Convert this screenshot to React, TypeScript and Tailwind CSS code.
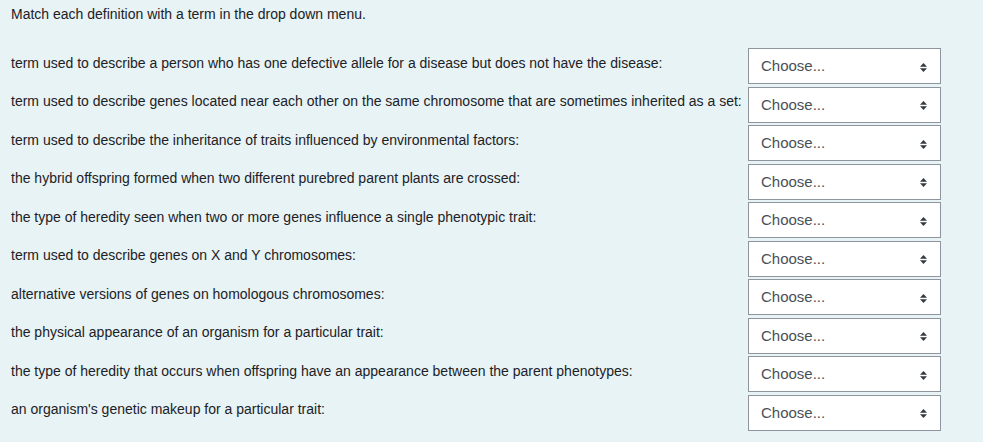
import React from "react";

const defs = [
  "term used to describe a person who has one defective allele for a disease but does not have the disease:",
  "term used to describe genes located near each other on the same chromosome that are sometimes inherited as a set:",
  "term used to describe the inheritance of traits influenced by environmental factors:",
  "the hybrid offspring formed when two different purebred parent plants are crossed:",
  "the type of heredity seen when two or more genes influence a single phenotypic trait:",
  "term used to describe genes on X and Y chromosomes:",
  "alternative versions of genes on homologous chromosomes:",
  "the physical appearance of an organism for a particular trait:",
  "the type of heredity that occurs when offspring have an appearance between the parent phenotypes:",
  "an organism's genetic makeup for a particular trait:",
];

const Arrows = () => (
  <svg width="7" height="9" viewBox="0 0 7 9" className="fill-[#343a40] mt-[2px]">
    <polygon points="3.5,0 7,3.7 0,3.7" />
    <polygon points="0,5.3 7,5.3 3.5,9" />
  </svg>
);

export default function App() {
  return (
    <div
      className="w-[983px] h-[442px] bg-[#e7f3f5] text-[14px] text-[#1d2125] overflow-hidden"
      style={{ fontFamily: '"Liberation Sans", Arial, sans-serif' }}
    >
      {/* instructions */}
      <div className="pl-[11px] pt-[6px] h-[47px] leading-[17px]">
        Match each definition with a term in the drop down menu.
      </div>

      {/* definitions */}
      <div className="pl-[11px]">
        {defs.map((d, i) => (
          <div key={i} className="flex items-center h-[38.5px]">
            <div className="w-[737px] leading-[17px] -mt-[6px] whitespace-nowrap">{d}</div>
            <div className="w-[193px] h-[36px] bg-white border border-[#8f959e] flex items-center justify-between pl-[12px] pr-[13px] text-[15px] text-[#495057]">
              <span>Choose...</span>
              <Arrows />
            </div>
          </div>
        ))}
      </div>
    </div>
  );
}
